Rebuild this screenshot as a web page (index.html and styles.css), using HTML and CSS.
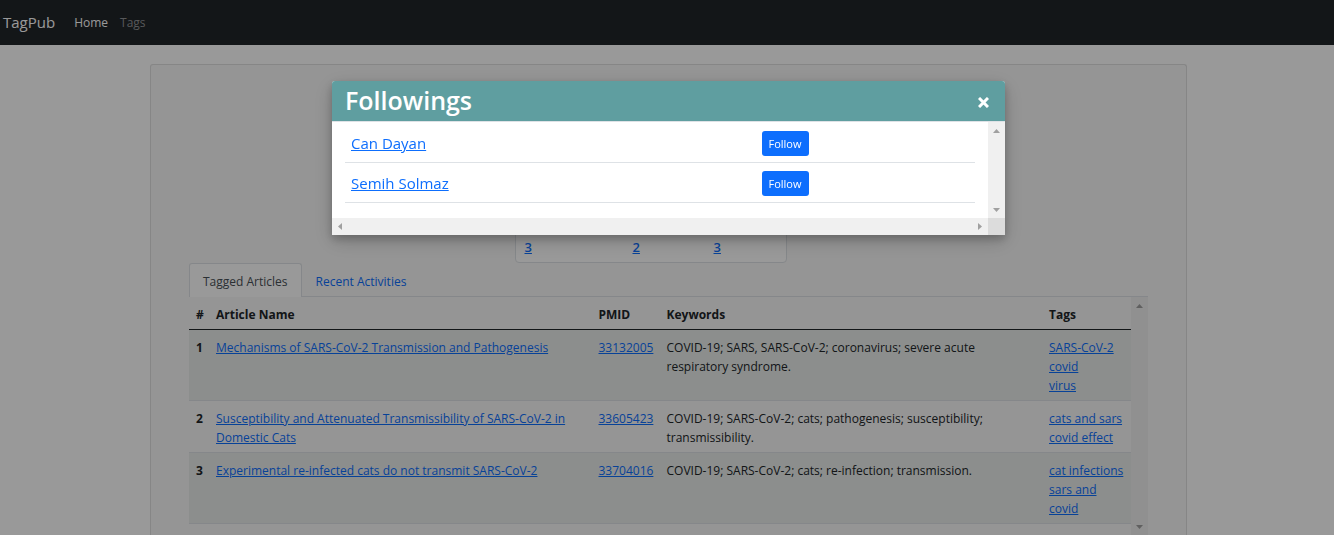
FILE: index.html
```
<!DOCTYPE html>
<html lang="en">
<head>
<meta charset="utf-8">
<title>TagPub</title>
<link rel="stylesheet" href="styles.css">
</head>
<body>
<nav class="navbar">
  <a class="brand" href="#">TagPub</a>
  <a class="nav-link current" href="#">Home</a>
  <a class="nav-link" href="#">Tags</a>
</nav>
<main class="page">
  <section class="profile-card">
    <div class="profile-head">
      <div class="stats"><a href="#">3</a><a href="#">2</a><a href="#">3</a></div>
    </div>
    <div class="tabs" role="tablist">
      <button class="tab active" type="button" role="tab" aria-selected="true">Tagged Articles</button>
      <button class="tab" type="button" role="tab" aria-selected="false">Recent Activities</button>
    </div>
    <div class="articles">
      <div class="table-wrap">
        <table class="article-table">
          <colgroup><col class="col-num"><col><col class="col-pmid"><col><col class="col-tags"></colgroup>
          <thead>
            <tr><th>#</th><th>Article Name</th><th>PMID</th><th>Keywords</th><th>Tags</th></tr>
          </thead>
          <tbody>
            <tr>
              <th>1</th>
              <td><a href="#">Mechanisms of SARS-CoV-2 Transmission and Pathogenesis</a></td>
              <td><a href="#">33132005</a></td>
              <td>COVID-19; SARS, SARS-CoV-2; coronavirus; severe acute<br>respiratory syndrome.</td>
              <td><a href="#">SARS-CoV-2</a><br><a href="#">covid</a><br><a href="#">virus</a></td>
            </tr>
            <tr>
              <th>2</th>
              <td><a href="#">Susceptibility and Attenuated Transmissibility of SARS-CoV-2 in<br>Domestic Cats</a></td>
              <td><a href="#">33605423</a></td>
              <td>COVID-19; SARS-CoV-2; cats; pathogenesis; susceptibility;<br>transmissibility.</td>
              <td><a href="#">cats and sars</a><br><a href="#">covid effect</a></td>
            </tr>
            <tr>
              <th>3</th>
              <td><a href="#">Experimental re-infected cats do not transmit SARS-CoV-2</a></td>
              <td><a href="#">33704016</a></td>
              <td>COVID-19; SARS-CoV-2; cats; re-infection; transmission.</td>
              <td><a href="#">cat infections</a><br><a href="#">sars and<br>covid</a></td>
            </tr>
          </tbody>
        </table>
      </div>
      <div class="scroll-y" aria-hidden="true"><i class="arrow up"></i><i class="arrow down"></i></div>
    </div>
  </section>
</main>
<div class="overlay">
  <div class="modal" role="dialog" aria-labelledby="modal-title">
    <header class="modal-header">
      <h2 class="modal-title" id="modal-title">Followings</h2>
      <button class="close" type="button" aria-label="Close">
        <svg width="11" height="11" viewBox="0 0 11 11"><path d="M1 1L10 10M10 1L1 10" stroke="currentColor" stroke-width="3"/></svg>
      </button>
    </header>
    <div class="modal-body">
      <div class="modal-content">
        <table class="people">
          <tbody>
            <tr><td class="person"><a href="#">Can Dayan</a></td><td><button class="follow" type="button">Follow</button></td></tr>
            <tr><td class="person"><a href="#">Semih Solmaz</a></td><td><button class="follow" type="button">Follow</button></td></tr>
          </tbody>
        </table>
      </div>
      <div class="scroll-y" aria-hidden="true"><i class="arrow up"></i><i class="arrow down"></i></div>
      <div class="scroll-x" aria-hidden="true"><i class="arrow left"></i><i class="arrow right"></i></div>
      <div class="scroll-corner"></div>
    </div>
  </div>
</div>
</body>
</html>
```
FILE: styles.css
```
* { box-sizing: border-box; }

body {
  margin: 0;
  height: 100vh;
  display: flex;
  flex-direction: column;
  overflow: hidden;
  background: #fff;
  color: #212529;
  font: 12px/19px "Open Sans", "Noto Sans", sans-serif;
}

button { font-family: inherit; cursor: pointer; }
a { color: #0d6efd; }

.navbar {
  display: flex;
  align-items: center;
  flex: none;
  height: 45px;
  padding: 0 3px;
  background: #212529;
}
.navbar a { text-decoration: none; }
.brand { margin-right: 13px; color: #fff; font-size: 15px; }
.nav-link { padding: 0 6px; color: #919395; }
.nav-link.current { color: #fff; }

.page {
  flex: 1;
  display: flex;
  justify-content: center;
  min-height: 0;
  padding: 19px 0 0 3px;
}
.profile-card {
  display: flex;
  flex-direction: column;
  width: 1037px;
  max-width: 100%;
  padding: 0 38px;
  border: 1px solid #dfdfdf;
  border-bottom: 0;
  border-radius: 3px 3px 0 0;
  background: #f8f8f8;
}
.profile-head {
  display: flex;
  flex: none;
  justify-content: center;
  align-items: flex-end;
  height: 198px;
}
.stats {
  display: grid;
  grid-template-columns: 108px 81px 1fr;
  align-items: end;
  width: 272px;
  height: 120px;
  margin-right: 36px;
  padding: 0 9px 5px;
  border: 1px solid #dee2e6;
  border-radius: 4px;
  background: #fff;
  font-size: 13px;
  font-weight: 600;
}

.tabs { display: flex; flex: none; border-bottom: 1px solid #dee2e6; }
.tab {
  height: 33px;
  padding: 2px 13px 0;
  border: 1px solid transparent;
  border-bottom: 0;
  border-radius: 3px 3px 0 0;
  background: none;
  color: #0d6efd;
  font-size: 12px;
}
.tab.active {
  height: 34px;
  margin-bottom: -1px;
  border-color: #dee2e6;
  background: #fff;
  color: #495057;
}

.articles { display: flex; flex: 1; min-height: 0; }
.table-wrap { flex: 1; overflow: hidden; }
.article-table { width: 100%; table-layout: fixed; border-spacing: 0; }
.article-table th, .article-table td {
  padding: 8px 0 5px 7px;
  border-bottom: 1px solid #dee2e6;
  text-align: left;
  vertical-align: top;
  white-space: nowrap;
}
.article-table th { font-weight: 700; }
.article-table thead th { border-color: #212529; }
.article-table tbody tr:nth-child(odd) { background: #e9edeb; }
.col-num { width: 20px; }
.col-pmid { width: 68px; }
.col-tags { width: 89px; }

.scroll-y, .scroll-x {
  display: flex;
  justify-content: space-between;
  align-items: center;
  background: #f0f0f0;
}
.scroll-y { flex-direction: column; width: 17px; padding: 7px 0 6px; }
.scroll-x { height: 17px; padding: 0 6px; }
.arrow { width: 7px; height: 4px; background: #a0a0a0; }
.up { clip-path: polygon(50% 0, 100% 100%, 0 100%); }
.down { clip-path: polygon(0 0, 100% 0, 50% 100%); }
.left, .right { width: 4px; height: 7px; }
.left { clip-path: polygon(0 50%, 100% 0, 100% 100%); }
.right { clip-path: polygon(0 0, 100% 50%, 0 100%); }

.overlay {
  position: fixed;
  inset: 0;
  padding: 81px 0 0 3px;
  background: rgba(0, 0, 0, .4);
}
.modal {
  width: 673px;
  max-width: 100%;
  margin: 0 auto;
  border-radius: 3px 3px 0 0;
  background: #fff;
  box-shadow: 0 4px 8px rgba(0, 0, 0, .2), 0 6px 20px rgba(0, 0, 0, .19);
}
.modal-header {
  display: flex;
  justify-content: space-between;
  align-items: center;
  height: 41px;
  padding: 0 13px 2px;
  border-bottom: 1px solid #dee2e6;
  border-radius: 3px 3px 0 0;
  background: #5f9ea0;
  color: #fff;
}
.modal-title { margin: 0; font-size: 25px; line-height: 38px; font-weight: 600; }
.close { display: flex; padding: 4px 3px 0; border: 0; background: none; color: #fff; }
.modal-body { display: grid; grid-template-columns: 1fr 17px; }
.modal-content { padding: 1px 13px 15px; }
.people { width: 100%; table-layout: fixed; border-spacing: 0; }
.people td { height: 40px; padding: 2px 7px 0; border-bottom: 1px solid #dee2e6; }
.people .person { width: 65%; padding-left: 6px; font-size: 15px; }
.follow {
  display: block;
  height: 25px;
  padding: 0 7px;
  border: 0;
  border-radius: 3px;
  background: #0d6efd;
  color: #fff;
  font-size: 11px;
  font-weight: 500;
}
.scroll-corner { background: #dcdcdc; }
```
